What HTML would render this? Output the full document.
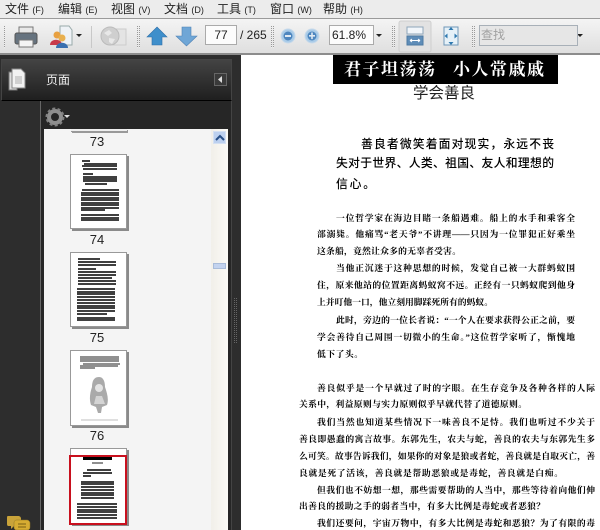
<!DOCTYPE html>
<html><head><meta charset="utf-8"><style>
html,body{margin:0;padding:0;background:#fff}
#r{position:relative;width:600px;height:530px;overflow:hidden;background:#fff;font-family:"Liberation Sans","Noto Sans CJK SC",sans-serif;filter:blur(.3px)}
.a{position:absolute}
.m{position:absolute;top:1px;font-size:12px;line-height:16px;color:#222;white-space:nowrap}
.m small{font-size:9px}
.l{position:absolute;height:14px;overflow:hidden;font-family:"Liberation Serif","Noto Serif CJK SC",serif;color:#000;text-align:justify;text-align-last:justify;font-size:8.8px;line-height:14px;font-weight:700}
.i{position:absolute;height:18px;overflow:hidden;font-family:"Liberation Sans","Noto Sans CJK SC",sans-serif;color:#000;text-align:justify;text-align-last:justify;font-size:11.800px;line-height:18px;font-weight:500}
.n{position:absolute;left:82px;width:30px;text-align:center;font-size:13px;line-height:14px;color:#222}
.t{position:absolute;left:70px;width:57px;background:#fff;border:1px solid #999;box-shadow:2px 2px 0 #8a8a8a;box-sizing:border-box}
.g{position:absolute;width:1px;height:22px;top:26px;background:repeating-linear-gradient(#999 0 1px,#eee 1px 2px)}
</style></head><body><div id="r">
<div class="a" style="left:0;top:0;width:600px;height:18px;background:#ececec"></div>
<div class="a" style="left:0;top:18px;width:600px;height:1px;background:#9a9a9a"></div>
<div class="a" style="left:0;top:19px;width:600px;height:35px;background:linear-gradient(#f4f4f4,#dedede)"></div>
<div class="a" style="left:0;top:53px;width:600px;height:2px;background:#8c8c8c"></div>
<div class="m" style="left:5px">文件 <small>(F)</small></div>
<div class="m" style="left:58px">编辑 <small>(E)</small></div>
<div class="m" style="left:111px">视图 <small>(V)</small></div>
<div class="m" style="left:164px">文档 <small>(D)</small></div>
<div class="m" style="left:217px">工具 <small>(T)</small></div>
<div class="m" style="left:270px">窗口 <small>(W)</small></div>
<div class="m" style="left:323px">帮助 <small>(H)</small></div>

<div class="g" style="left:4px"></div>
<svg class="a" style="left:0;top:19px" width="600" height="36" viewBox="0 19 600 36">
<rect x="19" y="27" width="14" height="7" fill="#e8e8e8" stroke="#777"/>
<rect x="15" y="33" width="22" height="11" rx="2" fill="#66737f" stroke="#555"/>
<rect x="19" y="40" width="14" height="7" fill="#f4f4f4" stroke="#777"/>
<path d="M60 26h9l3 4v15H60z" fill="#eef2f6" stroke="#9aa"/>
<circle cx="57" cy="35" r="3.500" fill="#e8a040"/><path d="M50 45c0-7 12-7 12 0z" fill="#c83a4a"/>
<circle cx="62" cy="38" r="3.500" fill="#e8b050"/><path d="M56 48c0-7 12-7 12 0z" fill="#3a70b0"/>
<path d="M76 34h6l-3 3z" fill="#222"/>
<rect x="91" y="26" width="1" height="22" fill="#c8c8c8"/>
<rect x="113" y="29" width="13" height="16" fill="#e4e4e4" stroke="#ccc"/>
<circle cx="110" cy="36" r="9" fill="#cfcfcf" stroke="#bbb"/>
<path d="M104 33l5-3 3 3-4 3zM109 38l6 1-3 5-3-2z" fill="#e8e8e8"/>
<path d="M157 27l10 10h-5v8h-10v-8h-5z" fill="#3f8fcb" stroke="#2f6fa8" stroke-width=".6"/>
<path d="M182 27h9v9h6l-10.500 10-10.500-10h6z" fill="#6fa6d6" stroke="#4f82b5" stroke-width=".6"/>
<circle cx="288" cy="36" r="7" fill="#a9cbe8" stroke="#c6d9ea"/><circle cx="288" cy="36" r="4.500" fill="#4d86bf"/><rect x="285" y="35" width="6" height="2" fill="#dfe9f2"/>
<circle cx="312" cy="36" r="7" fill="#a9cbe8" stroke="#c6d9ea"/><circle cx="312" cy="36" r="4.500" fill="#4d86bf"/><path d="M309 35h2.200v-2.500h1.600v2.500H315v1.600h-2.200v2.500h-1.600v-2.500H309z" fill="#dfe9f2"/>
<path d="M376 34h6l-3 3z" fill="#222"/>
<path d="M577 34h6l-3 3z" fill="#222"/>
<rect x="399" y="21" width="32" height="31" rx="2" fill="#e2e2e2" stroke="#cfcfcf"/>
<rect x="407" y="27" width="16" height="7" fill="#f2f6fa" stroke="#8fa6bb"/>
<rect x="407" y="36" width="16" height="9" fill="#5f8db8" stroke="#4d7aa3"/>
<path d="M410 40.500h10M410 40.500l2-1.500M410 40.500l2 1.500M420 40.500l-2-1.500M420 40.500l-2 1.500" stroke="#fff" fill="none"/>
<rect x="444" y="27" width="14" height="18" fill="#e6f1f8" stroke="#6f97b8"/>
<path d="M451 27l-2.500 3h5zM451 45l-2.500-3h5zM444.500 36l3-2.500v5zM457.500 36l-3-2.500v5z" fill="#2f79b0"/>
</svg>
<div class="g" style="left:137px"></div><div class="g" style="left:139px"></div>
<div class="g" style="left:271px"></div><div class="g" style="left:273px"></div>
<div class="g" style="left:392px"></div><div class="g" style="left:394px"></div>
<div class="g" style="left:472px"></div><div class="g" style="left:474px"></div>
<div class="a" style="left:205px;top:25px;width:32px;height:20px;background:#fcfcfc;border:1px solid #aaa;box-sizing:border-box;text-align:center;font-size:12px;line-height:18px;color:#222">77</div>
<div class="a" style="left:240px;top:27px;font-size:12px;line-height:16px;color:#222">/ 265</div>
<div class="a" style="left:329px;top:25px;width:45px;height:20px;background:#fcfcfc;border:1px solid #aaa;box-sizing:border-box;padding-left:2px;font-size:12px;line-height:18px;color:#222">61.8%</div>
<div class="a" style="left:479px;top:25px;width:99px;height:21px;background:#e6e6e6;border:1px solid #a8b0b8;box-sizing:border-box;padding-left:1px;font-size:12px;line-height:19px;color:#a0a0a0">查找</div>

<div class="a" style="left:0;top:55px;width:241px;height:475px;background:#2d2d2d"></div>
<div class="a" style="left:1px;top:59px;width:231px;height:42px;background:linear-gradient(#434343,#1f1f1f);border:1px solid #444;border-bottom:1px solid #000;box-sizing:border-box"></div>
<svg class="a" style="left:8px;top:68px" width="20" height="24"><path d="M1 4h8v18H1z" fill="#ddd" stroke="#777"/><path d="M4 1h9l4 4v15H4z" fill="#f2f2f2" stroke="#888"/><rect x="7" y="8" width="7" height="8" fill="#d0d0d0"/></svg>
<div class="a" style="left:46px;top:72px;font-size:12px;line-height:16px;color:#eee">页面</div>
<div class="a" style="left:214px;top:73px;width:13px;height:13px;background:#3a3a3a;border:1px solid #666;box-sizing:border-box"></div>
<svg class="a" style="left:218px;top:76px" width="6" height="8"><path d="M4 0v7L0 3.500z" fill="#ddd"/></svg>
<div class="a" style="left:40px;top:101px;width:1px;height:429px;background:#666"></div>
<div class="a" style="left:41px;top:101px;width:190px;height:429px;background:#262626"></div>
<div class="a" style="left:231px;top:101px;width:1px;height:429px;background:#444"></div>
<svg class="a" style="left:45px;top:106px" width="30" height="22"><circle cx="10" cy="11" r="6" fill="none" stroke="#8e8e8e" stroke-width="4"/><circle cx="10" cy="11" r="8.500" fill="none" stroke="#808080" stroke-width="2" stroke-dasharray="3 2.300"/><path d="M19 9h6l-3 3z" fill="#ddd"/></svg>

<div class="a" style="left:44px;top:129px;width:167px;height:401px;background:#f4f4f4"></div>
<div class="a" style="left:211px;top:129px;width:17px;height:401px;background:linear-gradient(90deg,#f1efe9,#fbfaf6)"></div>
<div class="a" style="left:213px;top:131px;width:13px;height:13px;background:#bcd0ef;border:1px solid #d4e0f2;box-sizing:border-box"></div>
<svg class="a" style="left:215px;top:134px" width="10" height="7"><path d="M1 6l4-4 4 4" fill="none" stroke="#274f87" stroke-width="2"/></svg>
<div class="a" style="left:213px;top:263px;width:13px;height:6px;background:#c3d3ef;border:1px solid #a9bcd9;box-sizing:border-box"></div>
<div class="a" style="left:234px;top:298px;width:1px;height:46px;background:repeating-linear-gradient(#666 0 1px,#2b2b2b 1px 2px)"></div>
<div class="a" style="left:236px;top:298px;width:1px;height:46px;background:repeating-linear-gradient(#666 0 1px,#2b2b2b 1px 2px)"></div>
<div class="a" style="left:71px;top:129px;width:56px;height:2px;background:#eee;border-bottom:1px solid #999;box-shadow:1px 1px 0 #999"></div>

<div class="n" style="top:135px">73</div>
<div class="t" style="top:154px;height:75px"><svg width="55" height="73" style="display:block"><path d="M11 6h8M13 9h33M11 11h35M12 14h34M12 19h10M12 22h34M12 24h34M12 26h34M14 29h22M11 35h37M10 38h38M10 40h38M10 43h38M10 45h38M10 48h38M10 50h38M10 53h38M10 55h24M10 60h38M10 63h38M10 65h38" stroke="#000" stroke-width="1.500"/></svg></div>
<div class="n" style="top:233px">74</div>
<div class="t" style="top:252px;height:75px"><svg width="55" height="73" style="display:block"><path d="M7 6h22M7 9h38M7 12h38M7 16h18M7 19h38M7 22h38M7 25h34M7 28h38M7 31h38M6 36h38M6 39h38M6 41h38M6 44h38M6 47h38M6 50h38M6 53h38M6 55h38M6 58h38M6 61h30M6 65h38M6 67h38" stroke="#000" stroke-width="1.500"/></svg></div>
<div class="n" style="top:331px">75</div>
<div class="t" style="top:350px;height:76px"><svg width="55" height="74" style="display:block"><path d="M9 6h39M9 8h39M9 10h39M12 13h37M9 15h38M9 17h15" stroke="#222" stroke-width="1"/><path d="M28 26c-5 0-7 4-7 10-2 6-3 12-1 18l5 2 2 6h3l1-6 5-2c2-6 0-12-2-18 0-6-2-10-6-10z" fill="#aaa"/><circle cx="28" cy="37" r="4" fill="#e4e4e4"/><path d="M25 45h6l3 8h-11z" fill="#d4d4d4"/><path d="M10 69h37" stroke="#ccc" stroke-width="1.200"/></svg></div>
<div class="n" style="top:429px">76</div>
<div class="t" style="top:448px;height:76px"></div>
<div class="a" style="left:69px;top:455px;width:58px;height:70px;border:2px solid #c8101e;box-sizing:border-box;background:#fff;overflow:hidden"><svg width="54" height="66" style="display:block"><path d="M12 1.500h29" stroke="#000" stroke-width="3"/><path d="M21 6h11" stroke="#444" stroke-width="1.200"/><path d="M16 13h24M12 16h29M12 19h8M10 25h33M10 27h33M10 30h33M10 33h33M10 36h33M10 38h33M10 41h33M6 47h40M6 50h40M6 53h40M6 55h40M6 58h40M6 61h40" stroke="#000" stroke-width="1.400"/></svg></div>
<svg class="a" style="left:6px;top:515px" width="26" height="15"><path d="M2 1h10c2 0 3 1 3 3v4c0 2-1 3-3 3H8l-3 3v-3H3C1 11 1 10 1 8V3c0-1 0-2 1-2z" fill="#c9a33a"/><path d="M11 5h10c2 0 3 2 3 3v4c0 2-1 3-3 3H11c-2 0-3-1-3-3V8c0-2 1-3 3-3z" fill="#d6ac32" stroke="#8e7420" stroke-width=".5"/><path d="M12 9h8M12 12h8" stroke="#7a5f14"/></svg>

<div class="a" style="left:241px;top:55px;width:359px;height:475px;background:#fff"></div>
<div class="a" style="left:333px;top:55px;width:225px;height:29px;background:#000"></div>
<div class="a" style="left:344px;top:58px;font-family:'Noto Serif CJK SC',serif;font-weight:700;font-size:17px;letter-spacing:1.500px;line-height:20px;color:#fff;white-space:nowrap">君子坦荡荡</div>
<div class="a" style="left:453px;top:58px;font-family:'Noto Serif CJK SC',serif;font-weight:700;font-size:17px;letter-spacing:1.500px;line-height:20px;color:#fff;white-space:nowrap">小人常戚戚</div>
<div class="a" style="left:413px;top:83px;font-family:'Noto Sans CJK SC',sans-serif;font-size:15.500px;line-height:18px;color:#222;white-space:nowrap">学会善良</div>
<div class="i" style="left:361px;top:135px;width:193px">善良者微笑着面对现实，永远不丧</div>
<div class="i" style="left:336px;top:154px;width:218px">失对于世界、人类、祖国、友人和理想的</div>
<div class="i" style="left:336px;top:175px;width:39px">信心。</div>

<div class="l" style="left:336px;top:211px;width:239px">一位哲学家在海边目睹一条船遇难。船上的水手和乘客全</div>
<div class="l" style="left:317px;top:227px;width:258px">部溺毙。他痛骂“老天爷”不讲理——只因为一位罪犯正好乘坐</div>
<div class="l" style="left:317px;top:244px;width:144px">这条船，竟然让众多的无辜者受害。</div>
<div class="l" style="left:336px;top:261px;width:239px">当他正沉迷于这种思想的时候，发觉自己被一大群蚂蚁围</div>
<div class="l" style="left:317px;top:278px;width:258px">住，原来他站的位置距离蚂蚁窝不远。正经有一只蚂蚁爬到他身</div>
<div class="l" style="left:317px;top:295px;width:176px">上并叮他一口，他立刻用脚踩死所有的蚂蚁。</div>
<div class="l" style="left:336px;top:313px;width:239px">此时，旁边的一位长者说：“一个人在要求获得公正之前，要</div>
<div class="l" style="left:317px;top:330px;width:258px">学会善待自己周围一切微小的生命。”这位哲学家听了，惭愧地</div>
<div class="l" style="left:317px;top:347px;width:46px">低下了头。</div>

<div class="l" style="left:317px;top:381px;width:278px">善良似乎是一个早就过了时的字眼。在生存竞争及各种各样的人际</div>
<div class="l" style="left:299px;top:397px;width:228px">关系中，利益原则与实力原则似乎早就代替了道德原则。</div>
<div class="l" style="left:317px;top:415px;width:278px">我们当然也知道某些情况下一味善良不足恃。我们也听过不少关于</div>
<div class="l" style="left:299px;top:432px;width:296px">善良即愚蠢的寓言故事。东郭先生，农夫与蛇，善良的农夫与东郭先生多</div>
<div class="l" style="left:299px;top:449px;width:296px">么可笑。故事告诉我们，如果你的对象是狼或者蛇，善良就是自取灭亡，善</div>
<div class="l" style="left:299px;top:466px;width:264px">良就是死了活该，善良就是帮助恶狼或是毒蛇，善良就是白痴。</div>
<div class="l" style="left:317px;top:483px;width:278px">但我们也不妨想一想，那些需要帮助的人当中，那些等待着向他们伸</div>
<div class="l" style="left:299px;top:499px;width:246px">出善良的援助之手的弱者当中，有多大比例是毒蛇或者恶狼？</div>
<div class="l" style="left:317px;top:516px;width:278px">我们还要问，宇宙万物中，有多大比例是毒蛇和恶狼？为了有限的毒</div>
</div></body></html>
